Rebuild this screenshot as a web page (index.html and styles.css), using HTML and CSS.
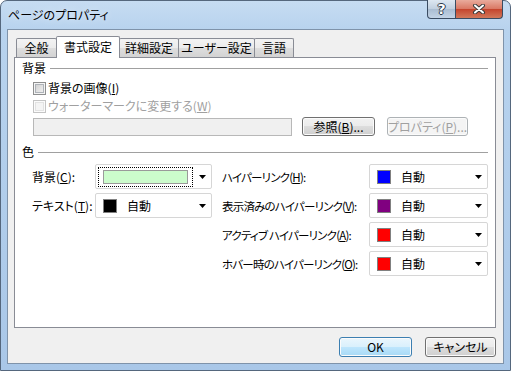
FILE: index.html
```html
<!DOCTYPE html>
<html lang="ja">
<head>
  <meta charset="UTF-8" />
  <title>ページのプロパティ</title>
  <link rel="stylesheet" href="styles.css">
</head>
<body>
  <div class="window">
    <div class="titlebar">
      <span class="title">ページのプロパティ</span>
      <div class="caption">
        <div class="cap help">?</div>
        <div class="cap close">
          <svg width="14" height="10" viewBox="0 0 14 10">
            <path d="M3 1.5 L11 8.5 M11 1.5 L3 8.5" stroke="#3a3a3a" stroke-width="4" stroke-linecap="round"/>
            <path d="M3 1.5 L11 8.5 M11 1.5 L3 8.5" stroke="#fff" stroke-width="2" stroke-linecap="round"/>
          </svg>
        </div>
      </div>
    </div>

    <div class="client">
      <div class="tabs">
        <div class="tab t1">全般</div>
        <div class="tab t2 active">書式設定</div>
        <div class="tab t3">詳細設定</div>
        <div class="tab t4">ユーザー設定</div>
        <div class="tab t5">言語</div>
      </div>

      <div class="panel">
        <div class="group-head">背景</div>
        <div class="check-row first">
          <span class="checkbox"></span>
          <span>背景の画像(<u>I</u>)</span>
        </div>
        <div class="check-row disabled">
          <span class="checkbox"></span>
          <span>ウォーターマークに変更する(<u>W</u>)</span>
        </div>
        <div class="path-row">
          <div class="textbox"></div>
          <div class="btn browse">参照(<u>B</u>)...</div>
          <div class="btn props disabled">プロパティ(<u>P</u>)...</div>
        </div>

        <div class="group-head second">色</div>
        <div class="colors">
          <div class="col left">
            <div class="color-row">
              <span class="label">背景(<u>C</u>):</span>
              <div class="combo">
                <div class="focus"><span class="wide-swatch"></span></div>
                <svg class="arrow" width="7" height="4" viewBox="0 0 7 4"><path d="M0 0 H7 L3.5 4 Z" fill="#000"/></svg>
              </div>
            </div>
            <div class="color-row">
              <span class="label">テキスト(<u>T</u>):</span>
              <div class="combo">
                <span class="swatch black"></span><span class="value">自動</span>
                <svg class="arrow" width="7" height="4" viewBox="0 0 7 4"><path d="M0 0 H7 L3.5 4 Z" fill="#000"/></svg>
              </div>
            </div>
          </div>

          <div class="col right">
            <div class="color-row">
              <span class="label">ハイパーリンク(<u>H</u>):</span>
              <div class="combo">
                <span class="swatch blue"></span><span class="value">自動</span>
                <svg class="arrow" width="7" height="4" viewBox="0 0 7 4"><path d="M0 0 H7 L3.5 4 Z" fill="#000"/></svg>
              </div>
            </div>
            <div class="color-row">
              <span class="label">表示済みのハイパーリンク(<u>V</u>):</span>
              <div class="combo">
                <span class="swatch purple"></span><span class="value">自動</span>
                <svg class="arrow" width="7" height="4" viewBox="0 0 7 4"><path d="M0 0 H7 L3.5 4 Z" fill="#000"/></svg>
              </div>
            </div>
            <div class="color-row">
              <span class="label">アクティブ ハイパーリンク(<u>A</u>):</span>
              <div class="combo">
                <span class="swatch red"></span><span class="value">自動</span>
                <svg class="arrow" width="7" height="4" viewBox="0 0 7 4"><path d="M0 0 H7 L3.5 4 Z" fill="#000"/></svg>
              </div>
            </div>
            <div class="color-row">
              <span class="label">ホバー時のハイパーリンク(<u>O</u>):</span>
              <div class="combo">
                <span class="swatch red"></span><span class="value">自動</span>
                <svg class="arrow" width="7" height="4" viewBox="0 0 7 4"><path d="M0 0 H7 L3.5 4 Z" fill="#000"/></svg>
              </div>
            </div>
          </div>
        </div>
      </div>

      <div class="footer">
        <div class="btn ok default">OK</div>
        <div class="btn cancel">キャンセル</div>
      </div>
    </div>
  </div>
</body>
</html>
```

FILE: styles.css
```css
* { box-sizing: border-box; }
body {
  margin: 0; background: #fff; color: #000;
  font-family: "Noto Sans CJK JP", "Noto Sans", sans-serif; font-size: 12px;
  font-feature-settings: "palt"; line-height: 16px;
}
u { text-decoration: underline; text-underline-offset: 1px; }

/* window frame */
.window {
  width: 511px; height: 371px; display: flex; flex-direction: column;
  border: 1px solid #55677d; border-radius: 7px 7px 0 0;
  background: linear-gradient(180deg, #c6dcf2 0, #b8d3ee 28px, #a9c7e8 100%);
  padding: 0 6px 6px;
}
.titlebar { height: 28px; display: flex; align-items: flex-start; flex: none; }
.title { margin: 6px 0 0 1px; line-height: 16px; text-shadow: 0 0 6px #e8f2fc; }
.caption { margin: -1px 1px 0 auto; display: flex; }
.cap {
  height: 19px; border: 1px solid #3a4c62; border-top: none;
  display: flex; align-items: center; justify-content: center;
}
.help {
  width: 29px; border-radius: 0 0 0 4px;
  background: linear-gradient(#dde7f1, #c0cfdf 50%, #a9bcd1 50%, #c3d4e6);
  color: #fff; font: bold 14px "DejaVu Sans", sans-serif; line-height: 17px;
  text-shadow: 1px 0 0 #2a3848, -1px 0 0 #2a3848, 0 1px 0 #2a3848, 0 -1px 0 #2a3848;
}
.close {
  width: 47px; border-left: none; border-radius: 0 0 4px 0;
  background: linear-gradient(#e9ab9c, #d97763 50%, #c4432c 50%, #d2785a);
}

/* client area */
.client {
  height: 335px; flex: none;
  border: 1px solid #7f93aa; background: #f0f0f0;
  padding: 6px 7px 0 6px; display: flex; flex-direction: column;
}
.tabs { display: flex; align-items: flex-end; height: 21px; padding-left: 2px; flex: none; }
.tab {
  height: 19px; margin-right: -1px; text-align: center; line-height: 18px;
  border: 1px solid #898c95; border-bottom: none; border-radius: 2px 2px 0 0;
  background: linear-gradient(#f3f3f3, #ebebeb 50%, #dedede 50%, #d3d3d3);
  white-space: nowrap;
}
.t1 { width: 41px; }
.t2 { width: 64px; }
.t3 { width: 60px; }
.t4 { width: 77px; }
.t5 { width: 40px; }
.tab.active {
  height: 22px; margin-bottom: -1px; position: relative; z-index: 1;
  background: #fff; line-height: 19px;
}

.panel {
  height: 271px; flex: none; background: #fff;
  border: 1px solid #898c95; padding: 2px 7px 0;
}
.group-head { display: flex; align-items: center; gap: 4px; height: 16px; }
.group-head::after { content: ""; flex: 1; border-top: 1px solid #a0a0a0; }
.group-head.second { margin-top: 8px; }

.check-row { display: flex; align-items: center; gap: 2px; height: 18px; padding-left: 11px; white-space: nowrap; }
.check-row.first { margin-top: 3px; }
.checkbox {
  width: 13px; height: 13px; flex: none;
  border: 1px solid #8e8f8f;
  background: linear-gradient(135deg, #cbcbcb, #f6f6f6);
  box-shadow: inset 0 0 0 1px #f4f4f4, inset 0 0 0 2px #aeb3b9;
}
.check-row.disabled { color: #a0a0a0; }
.check-row.disabled .checkbox {
  border-color: #c4c4c4; background: #f4f4f4;
  box-shadow: inset 0 0 0 1px #fbfbfb, inset 0 0 0 2px #e2e2e2;
}

.path-row { display: flex; align-items: center; height: 19px; margin-top: 2px; padding-left: 11px; }
.textbox { width: 259px; height: 18px; border: 1px solid #b8b8b8; background: #f0f0f0; }

.btn {
  display: flex; align-items: center; justify-content: center;
  border: 1px solid #707070; border-radius: 3px; white-space: nowrap;
  background: linear-gradient(#f2f2f2, #ebebeb 50%, #dddddd 50%, #cfcfcf);
  box-shadow: inset 0 0 0 1px #fbfbfb; line-height: 14px;
}
.btn.disabled { border-color: #adb2b5; background: #f4f4f4; color: #a0a0a0; }
.btn.default {
  border-color: #3c7fb1;
  background: linear-gradient(#eaf6fd, #d9f0fc 50%, #bee6fd 50%, #a7d9f5);
}
.browse { width: 73px; height: 19px; margin-left: 10px; }
.props { width: 81px; height: 19px; margin-left: 12px; }

/* colour rows */
.colors { display: flex; gap: 10px; margin-top: 4px; padding-left: 10px; }
.col { display: flex; flex-direction: column; gap: 4px; }
.color-row { display: flex; align-items: center; height: 25px; }
.label { white-space: nowrap; }
.left .label { width: 63px; }
.right .label { width: 147px; font-size: 11.5px; letter-spacing: -0.8px; }
.combo {
  height: 25px; display: flex; align-items: center;
  border: 1px solid #d6d6d6; border-radius: 2px; background: #fff;
  padding: 0 5px 0 7px;
}
.left .combo { width: 117px; }
.right .combo { width: 119px; }
.swatch { width: 14px; height: 14px; border: 1px solid #808080; flex: none; }
.black { background: #000; }
.blue { background: #0000ff; }
.purple { background: #800080; }
.red { background: #ff0000; }
.value { margin-left: 10px; }
.arrow { margin-left: auto; flex: none; }
.focus {
  width: 95px; height: 20px; margin-left: -5px;
  border: 1px dotted #000; padding: 2px 4px;
}
.wide-swatch { display: block; width: 85px; height: 14px; background: #ccfccc; border: 1px solid #9a9a9a; }

.footer { display: flex; justify-content: flex-end; gap: 13px; margin-top: 9px; }
.ok { width: 73px; height: 20px; }
.cancel { width: 71px; height: 20px; }
```
